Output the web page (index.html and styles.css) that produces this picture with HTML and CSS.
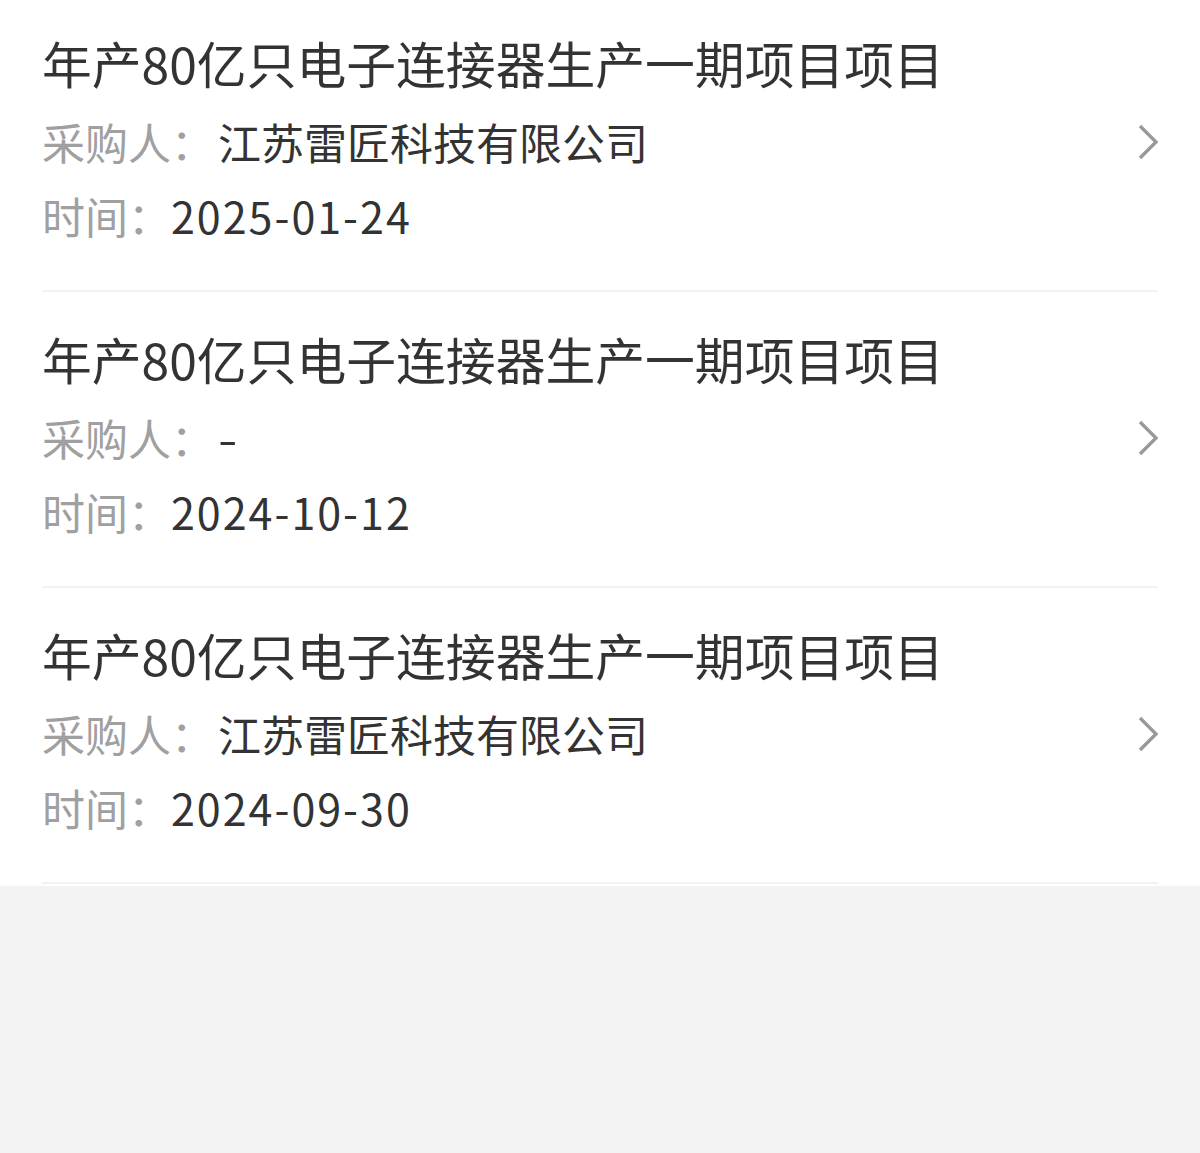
FILE: index.html
```html
<!DOCTYPE html>
<html lang="zh-CN">
<head>
<meta charset="utf-8">
<title>项目列表</title>
<link rel="stylesheet" href="styles.css">
</head>
<body>
<div class="list">
  <div class="item">
    <div class="info">
      <div class="title">年产80亿只电子连接器生产一期项目项目</div>
      <div class="row"><span class="label">采购人：</span><span class="value buyer">江苏雷匠科技有限公司</span></div>
      <div class="row"><span class="label">时间：</span><span class="value date">2025-01-24</span></div>
    </div>
    <svg class="chev" width="22" height="36" viewBox="0 0 22 36"><polyline points="3,2 19,18 3,34" fill="none" stroke="#999999" stroke-width="3.4"/></svg>
  </div>
  <div class="item">
    <div class="info">
      <div class="title">年产80亿只电子连接器生产一期项目项目</div>
      <div class="row"><span class="label">采购人：</span><span class="value buyer dash">-</span></div>
      <div class="row"><span class="label">时间：</span><span class="value date">2024-10-12</span></div>
    </div>
    <svg class="chev" width="22" height="36" viewBox="0 0 22 36"><polyline points="3,2 19,18 3,34" fill="none" stroke="#999999" stroke-width="3.4"/></svg>
  </div>
  <div class="item">
    <div class="info">
      <div class="title">年产80亿只电子连接器生产一期项目项目</div>
      <div class="row"><span class="label">采购人：</span><span class="value buyer">江苏雷匠科技有限公司</span></div>
      <div class="row"><span class="label">时间：</span><span class="value date">2024-09-30</span></div>
    </div>
    <svg class="chev" width="22" height="36" viewBox="0 0 22 36"><polyline points="3,2 19,18 3,34" fill="none" stroke="#999999" stroke-width="3.4"/></svg>
  </div>
</div>
</body>
</html>
```
FILE: styles.css
```css
html, body {
  margin: 0;
  padding: 0;
  background: #f3f3f3;
  font-family: "Noto Sans CJK SC", "Noto Sans", sans-serif;
}
.list {
  background: #ffffff;
  padding: 0 42px 2px 42px;
}
.item {
  display: flex;
  align-items: center;
  justify-content: space-between;
  padding: 36px 0 38px 0;
  border-bottom: 2px solid #f2f2f2;
}
.item:first-child {
  padding-top: 32px;
}
.info {
  display: flex;
  flex-direction: column;
}
.title {
  font-size: 49.8px;
  line-height: 60px;
  color: #333333;
  margin-bottom: 12px;
  white-space: nowrap;
}
.row {
  font-size: 43px;
  line-height: 74px;
  white-space: nowrap;
}
.label {
  color: #a0a0a0;
}
.value {
  color: #333333;
}
.buyer {
  margin-left: 4px;
}
.dash {
  display: inline-block;
  transform: scaleX(1.3);
  transform-origin: left center;
}
.date {
  letter-spacing: 2px;
}
.chev {
  display: block;
  flex: none;
  margin-right: -1px;
}
```
